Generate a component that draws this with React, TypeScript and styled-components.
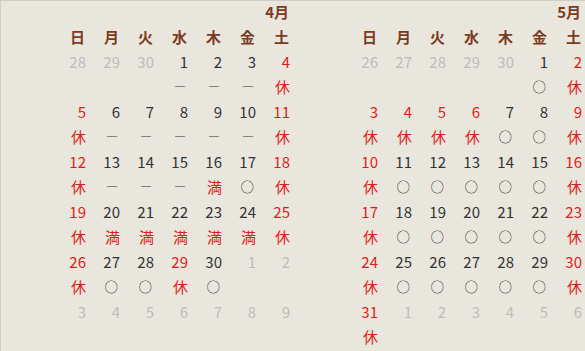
import * as React from 'react'
import styled, { createGlobalStyle } from 'styled-components'

type Tone = 'normal' | 'red' | 'gray'
type MarkKind = 'kanji' | 'circle' | 'dash'

interface Day {
	n: number
	tone: Tone
	mark?: string
	markTone?: Tone
}

const GlobalStyle = createGlobalStyle`
	html, body {
		margin: 0;
		padding: 0;
		height: 100%;
		background: #e9e7dd;
	}
	body {
		font-family: "Noto Sans CJK JP", "DejaVu Sans", sans-serif;
	}
`

const Page = styled.div`
	display: flex;
	width: 585px;
	height: 351px;
	box-sizing: border-box;
	border-top: 1px solid #cfcdc6;
	border-left: 1px solid #cfcdc6;
	background: #e9e7dd;
	overflow: hidden;
`

const MonthPanel = styled.div`
	flex: 1;
	display: flex;
	flex-direction: column;
	align-items: flex-end;
	padding-right: 3px;
	margin-top: -2px;
`

const MonthTitle = styled.div`
	height: 25px;
	line-height: 25px;
	font-size: 15px;
	font-weight: bold;
	color: #7c3a1e;
	padding-right: 1px;
`

const Grid = styled.div`
	display: grid;
	grid-template-columns: repeat(7, 34px);
	grid-auto-rows: 25px;
`

const DayName = styled.div`
	text-align: right;
	line-height: 25px;
	font-size: 15px;
	font-weight: bold;
	color: #7c3a1e;
	padding-right: 1px;
`

const toneColor = (tone: Tone) => (tone === 'red' ? '#e01b1b' : tone === 'gray' ? '#bcbcbc' : '#333')

const Cell = styled.div<{ $tone: Tone }>`
	text-align: right;
	line-height: 25px;
	font-size: 15px;
	color: ${({ $tone }) => toneColor($tone)};
	white-space: nowrap;
`

// ○ and ― are drawn a bit smaller than the kanji in the original
const Mark = styled(Cell)<{ $kind: MarkKind }>`
	font-size: ${({ $kind }) => ($kind === 'circle' ? '13.5px' : $kind === 'dash' ? '12px' : '15px')};
	font-weight: ${({ $kind }) => ($kind === 'dash' ? 'bold' : 'normal')};
	padding-right: ${({ $kind }) => ($kind === 'kanji' ? '0' : '2px')};
`

const DAY_NAMES = ['日', '月', '火', '水', '木', '金', '土']

const d = (n: number, tone: Tone, mark?: string, markTone?: Tone): Day => ({ n, tone, mark, markTone })
const g = (n: number) => d(n, 'gray')
const hol = (n: number) => d(n, 'red', '休', 'red')
const ok = (n: number) => d(n, 'normal', '○', 'normal')
const no = (n: number) => d(n, 'normal', '―', 'normal')
const full = (n: number) => d(n, 'normal', '満', 'red')

const kindOf = (mark?: string): MarkKind => (mark === '○' ? 'circle' : mark === '―' ? 'dash' : 'kanji')

const april: Day[][] = [
	[g(28), g(29), g(30), no(1), no(2), no(3), hol(4)],
	[hol(5), no(6), no(7), no(8), no(9), no(10), hol(11)],
	[hol(12), no(13), no(14), no(15), full(16), ok(17), hol(18)],
	[hol(19), full(20), full(21), full(22), full(23), full(24), hol(25)],
	[hol(26), ok(27), ok(28), hol(29), ok(30), g(1), g(2)],
	[g(3), g(4), g(5), g(6), g(7), g(8), g(9)],
]

const may: Day[][] = [
	[g(26), g(27), g(28), g(29), g(30), ok(1), hol(2)],
	[hol(3), hol(4), hol(5), hol(6), ok(7), ok(8), hol(9)],
	[hol(10), ok(11), ok(12), ok(13), ok(14), ok(15), hol(16)],
	[hol(17), ok(18), ok(19), ok(20), ok(21), ok(22), hol(23)],
	[hol(24), ok(25), ok(26), ok(27), ok(28), ok(29), hol(30)],
	[hol(31), g(1), g(2), g(3), g(4), g(5), g(6)],
]

const Month: React.FC<{ title: string; weeks: Day[][] }> = ({ title, weeks }) => (
	<MonthPanel>
		<MonthTitle>{title}</MonthTitle>
		<Grid>
			{DAY_NAMES.map((name) => (
				<DayName key={name}>{name}</DayName>
			))}
			{weeks.map((week, wi) => (
				<React.Fragment key={wi}>
					{week.map((day, di) => (
						<Cell key={'n' + di} $tone={day.tone}>{day.n}</Cell>
					))}
					{week.map((day, di) => (
						<Mark key={'m' + di} $tone={day.markTone || 'normal'} $kind={kindOf(day.mark)}>
							{day.mark || ''}
						</Mark>
					))}
				</React.Fragment>
			))}
		</Grid>
	</MonthPanel>
)

export default function App() {
	return (
		<>
			<GlobalStyle />
			<Page>
				<Month title="4月" weeks={april} />
				<Month title="5月" weeks={may} />
			</Page>
		</>
	)
}
